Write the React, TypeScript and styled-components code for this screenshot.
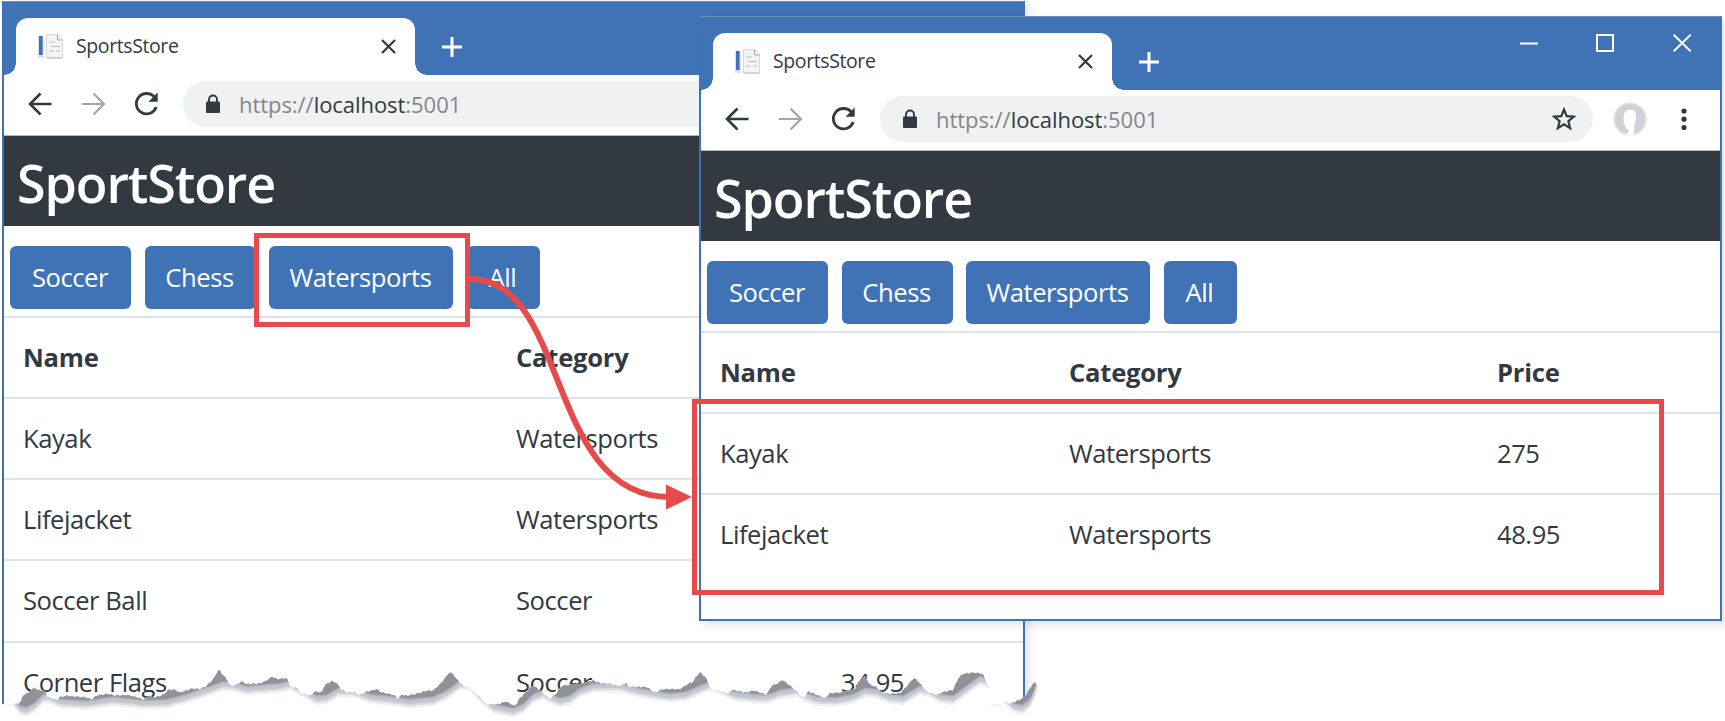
import React from "react";
import styled, { createGlobalStyle } from "styled-components";

const BLUE = "#3f73b6";
const DARK = "#333941";
const RED = "#e74a4b";

const Global = createGlobalStyle`
  *, *::before, *::after { box-sizing: border-box; }
  body {
    margin: 0;
    background: #fff;
    color: ${DARK};
    font-family: "Open Sans", "Noto Sans", sans-serif;
  }
`;

const Stage = styled.main`
  position: relative;
  width: 1725px;
  height: 721px;
  overflow: hidden;
  background: #fff;
`;

const BrowserWindow = styled.section<{ $x: number; $y: number; $height: number; $open?: boolean }>`
  position: absolute;
  left: ${(p) => p.$x}px;
  top: ${(p) => p.$y}px;
  width: 1023px;
  height: ${(p) => p.$height}px;
  display: flex;
  flex-direction: column;
  overflow: hidden;
  background: #fff;
  border: 2px solid ${BLUE};
  border-top: 1px solid #6f8fbc;
  border-bottom-width: ${(p) => (p.$open ? 0 : 2)}px;
  box-shadow: 5px ${(p) => (p.$open ? 0 : 5)}px 7px rgba(60, 65, 75, 0.12);
`;

const TitleBar = styled.header`
  flex: none;
  display: flex;
  align-items: flex-end;
  height: 73px;
  padding-left: 12px;
  background: ${BLUE};
`;

const Tab = styled.div`
  position: relative;
  display: flex;
  align-items: center;
  width: 399px;
  height: 57px;
  padding: 0 19px 1px 21px;
  background: #fff;
  border-radius: 12px 12px 0 0;

  &::before,
  &::after {
    content: "";
    position: absolute;
    bottom: 0;
    width: 12px;
    height: 12px;
  }
  &::before {
    right: 100%;
    background: radial-gradient(circle at 0 0, transparent 11.5px, #fff 12px);
  }
  &::after {
    left: 100%;
    background: radial-gradient(circle at 100% 0, transparent 11.5px, #fff 12px);
  }
`;

const TabTitle = styled.span`
  flex: 1;
  margin-left: 12px;
  font-size: 19.5px;
  line-height: 28px;
  letter-spacing: -0.4px;
`;

const NewTab = styled.div`
  display: flex;
  margin: 0 0 18px 27px;
`;

const WindowControls = styled.div`
  display: flex;
  gap: 58px;
  margin: 0 29px 38px auto;
`;

const Toolbar = styled.div`
  flex: none;
  display: flex;
  align-items: center;
  height: 61px;
  padding: 0 33px 2px 23px;
  border-bottom: 1px solid #b4b8bf;
`;

const NavButtons = styled.div`
  display: flex;
  gap: 27px;
  width: 156px;
`;

const AddressBar = styled.div`
  display: flex;
  align-items: center;
  width: 713px;
  height: 46px;
  padding: 0 17px 0 23px;
  border-radius: 23px;
  background: #f0f1f1;
`;

const Url = styled.span`
  flex: 1;
  margin-left: 19px;
  color: #85858d;
  font-size: 22px;
  line-height: 30px;
  letter-spacing: -0.05px;
`;

const Host = styled.span`
  color: ${DARK};
`;

const ToolbarEnd = styled.div`
  flex: 1;
  display: flex;
  align-items: center;
  justify-content: space-between;
  margin-left: 20px;
`;

const Banner = styled.h1`
  flex: none;
  height: 90px;
  margin: 0;
  padding-left: 13px;
  background: ${DARK};
  color: #fff;
  font-size: 52px;
  font-weight: 600;
  line-height: 93px;
  letter-spacing: -1.1px;
`;

const Categories = styled.nav`
  flex: none;
  display: flex;
  gap: 13.5px;
  padding: 20px 6px 6.5px;
`;

const CategoryButton = styled.button<{ $width: number }>`
  width: ${(p) => p.$width}px;
  height: 63px;
  padding: 0 1px 0 0;
  border: 0;
  border-radius: 6px;
  background: ${BLUE};
  color: #fff;
  font: 400 25.6px/63px "Open Sans", "Noto Sans", sans-serif;
  letter-spacing: -0.45px;
`;

const ProductTable = styled.div`
  display: flex;
  flex-direction: column;
`;

const Row = styled.div<{ $columns: string; $head?: boolean }>`
  display: grid;
  grid-template-columns: ${(p) => p.$columns};
  height: 81.3px;
  border-top: 2px solid #e0e2e6;
  font-size: 25.6px;
  font-weight: ${(p) => (p.$head ? 700 : 400)};
  line-height: 79px;
  letter-spacing: ${(p) => (p.$head ? -0.25 : -0.45)}px;
`;

const Cell = styled.span`
  padding-left: 18px;

  &:first-child {
    padding-left: 19px;
  }
`;

const Highlight = styled.div<{ $x: number; $y: number; $w: number; $h: number }>`
  position: absolute;
  left: ${(p) => p.$x}px;
  top: ${(p) => p.$y}px;
  width: ${(p) => p.$w}px;
  height: ${(p) => p.$h}px;
  border: 5px solid ${RED};
`;

const Overlay = styled.svg`
  position: absolute;
  inset: 0;
  pointer-events: none;
`;

const Favicon = () => (
  <svg width="27" height="27" viewBox="0 0 27 27">
    <path d="M1 3h6v22H1z" fill="#dfe3e9" />
    <path d="M2 3h3.600v19H2z" fill={BLUE} />
    <path d="M9.500 1.500h11l5 5v18.500h-16z" fill="#f3f4f4" stroke="#d4d7dc" />
    <path d="M20.500 2v5h5" fill="none" stroke="#a7abb4" />
    <path d="M12 9h6M14 13.500h9M12 18h5M19 18h4M10 25h15" stroke="#b9bcc5" strokeWidth="1.200" />
  </svg>
);

const Cross = () => (
  <svg width="15" height="15" viewBox="0 0 15 15">
    <path d="M1 1l13 13M14 1L1 14" stroke={DARK} strokeWidth="2.200" />
  </svg>
);

const Plus = () => (
  <svg width="20" height="20" viewBox="0 0 20 20">
    <path d="M10 0v20M0 10h20" stroke="#fff" strokeWidth="3" />
  </svg>
);

const Arrow = ({ forward }: { forward?: boolean }) => (
  <svg width="26" height="26" viewBox="0 0 26 26">
    <path
      d={forward ? "M2 13h22M13.500 2.500L24 13 13.500 23.500" : "M24.500 13H3M13.500 2.500L3 13l10.500 10.500"}
      fill="none"
      stroke={forward ? "#a3a5af" : DARK}
      strokeWidth={forward ? 2.2 : 2.6}
    />
  </svg>
);

const Reload = () => (
  <svg width="26" height="26" viewBox="0 0 26 26">
    <path d="M21.500 6.300A10.200 10.200 0 1 0 23.200 16" fill="none" stroke={DARK} strokeWidth="2.800" />
    <path d="M24.700 1.500v9.300h-9.200z" fill={DARK} />
  </svg>
);

const Lock = () => (
  <svg width="14" height="20" viewBox="0 0 14 20">
    <path d="M3 9V5.500a4 4 0 0 1 8 0V9" fill="none" stroke={DARK} strokeWidth="1.900" />
    <rect y="7.500" width="14" height="11.500" rx="1" fill={DARK} />
  </svg>
);

const Star = () => (
  <svg width="24" height="24" viewBox="0 0 24 24">
    <path
      d="M12 2.500l2.700 6.600 7.100.5-5.400 4.600 1.700 7L12 17.400l-6.100 3.800 1.700-7L2.200 9.600l7.100-.5z"
      fill="none"
      stroke={DARK}
      strokeWidth="2.200"
    />
  </svg>
);

const Avatar = () => (
  <svg width="34" height="34" viewBox="0 0 34 34">
    <circle cx="17" cy="17" r="16.500" fill="#cfd1d7" />
    <circle cx="17" cy="17" r="15.800" fill="none" stroke="#e4e6e8" strokeWidth="1.400" />
    <path
      d="M17 7.500c4.300 0 6.300 3.200 6 8-.2 3.500-1.400 5-1.700 8.200l-.4 9.300c-2.500.7-5.500.7-7.700 0l1.700-2.600 1.500-2-2.300-.9c-1.500-2.500-3.500-5-3.600-11.500 0-5 2.300-8.500 6.500-8.500z"
      fill="#fff"
    />
  </svg>
);

const Menu = () => (
  <svg width="6" height="24" viewBox="0 0 6 24">
    <circle cx="3" cy="4" r="2.600" fill={DARK} />
    <circle cx="3" cy="12.200" r="2.600" fill={DARK} />
    <circle cx="3" cy="20.500" r="2.600" fill={DARK} />
  </svg>
);

const ControlIcon = ({ d }: { d: string }) => (
  <svg width="18.500" height="18" viewBox="0 0 18.500 18">
    <path d={d} fill="none" stroke="#fff" strokeWidth="2" />
  </svg>
);

type Product = string[];

interface StoreProps {
  x: number;
  y: number;
  height: number;
  open?: boolean;
  columns: string;
  head: string[];
  products: Product[];
}

const CATEGORIES: [string, number][] = [
  ["Soccer", 121],
  ["Chess", 111],
  ["Watersports", 184],
  ["All", 73],
];

const StoreWindow = ({ x, y, height, open, columns, head, products }: StoreProps) => (
  <BrowserWindow $x={x} $y={y} $height={height} $open={open}>
    <TitleBar>
      <Tab>
        <Favicon />
        <TabTitle>SportsStore</TabTitle>
        <Cross />
      </Tab>
      <NewTab>
        <Plus />
      </NewTab>
      <WindowControls>
        <ControlIcon d="M0 9.500h18" />
        <ControlIcon d="M1 1h16v16H1z" />
        <ControlIcon d="M.7.700l17 16.600M17.700.700L.7 17.300" />
      </WindowControls>
    </TitleBar>
    <Toolbar>
      <NavButtons>
        <Arrow />
        <Arrow forward />
        <Reload />
      </NavButtons>
      <AddressBar>
        <Lock />
        <Url>
          https://<Host>localhost</Host>:5001
        </Url>
        <Star />
      </AddressBar>
      <ToolbarEnd>
        <Avatar />
        <Menu />
      </ToolbarEnd>
    </Toolbar>
    <Banner>SportStore</Banner>
    <Categories>
      {CATEGORIES.map(([name, width]) => (
        <CategoryButton key={name} $width={width}>
          {name}
        </CategoryButton>
      ))}
    </Categories>
    <ProductTable>
      <Row $columns={columns} $head>
        {head.map((h) => (
          <Cell key={h}>{h}</Cell>
        ))}
      </Row>
      {products.map((p) => (
        <Row key={p[0]} $columns={columns}>
          {p.map((v) => (
            <Cell key={v}>{v}</Cell>
          ))}
        </Row>
      ))}
    </ProductTable>
  </BrowserWindow>
);

/* Torn paper edge: ridge and foot lines in third-pixels, y measured from 660px. */
type Line = [number, number][];

const RIDGE: Line = [
  [40, 134], [62, 128], [70, 105], [85, 100], [93, 92], [105, 82], [112, 92], [120, 90], [135, 95], [143, 112], [170, 120],
  [180, 112], [200, 108], [225, 110], [260, 113], [275, 119], [290, 107], [325, 102], [345, 107], [380, 105], [410, 112],
  [430, 119], [445, 110], [465, 112], [490, 105], [505, 90], [525, 90], [540, 98], [560, 92], [577, 86], [600, 88],
  [620, 78], [640, 58], [650, 40], [657, 30], [664, 40], [675, 52], [693, 78], [712, 73], [725, 65], [740, 73], [780, 71],
  [800, 62], [817, 50], [830, 58], [860, 55], [868, 74], [880, 84], [888, 80], [900, 97], [930, 108], [945, 95],
  [965, 98], [975, 75], [995, 64], [1010, 69], [1020, 85], [1040, 98], [1060, 96], [1080, 105], [1095, 97], [1130, 88],
  [1145, 98], [1180, 105], [1195, 117], [1205, 104], [1220, 108], [1245, 103], [1280, 93], [1300, 92], [1325, 68],
  [1348, 38], [1357, 41], [1370, 58], [1390, 78], [1410, 85], [1425, 98], [1440, 112], [1460, 133], [1495, 133],
  [1518, 125], [1545, 139], [1560, 115], [1585, 90], [1600, 77], [1620, 92], [1635, 105], [1650, 118], [1670, 100],
  [1685, 78], [1710, 75], [1740, 72], [1780, 62], [1800, 70], [1830, 72], [1860, 78], [1878, 70], [1885, 80],
  [1940, 82], [1965, 98], [1990, 88], [2040, 88], [2060, 75], [2080, 65], [2090, 48], [2102, 38], [2118, 55],
  [2132, 87], [2165, 95], [2185, 101], [2195, 90], [2220, 95], [2240, 98], [2260, 92], [2300, 105], [2315, 78],
  [2335, 70], [2347, 60], [2360, 70], [2385, 90], [2400, 105], [2412, 114], [2425, 95], [2450, 105], [2475, 115],
  [2490, 100], [2525, 98], [2545, 92], [2565, 88], [2582, 62], [2594, 49], [2610, 75], [2630, 82], [2640, 95],
  [2665, 102], [2700, 100], [2720, 80], [2742, 54], [2755, 65], [2780, 95], [2810, 105], [2825, 98], [2860, 90],
  [2875, 55], [2890, 42], [2920, 38], [2948, 42], [2962, 74], [2972, 84],
];

const FOOT: Line = [
  [40, 138], [60, 165], [80, 170], [105, 155], [130, 130], [150, 130], [180, 145], [260, 150], [340, 138], [430, 148],
  [500, 146], [560, 130], [620, 110], [670, 92], [700, 95], [740, 106], [790, 102], [840, 98], [872, 90], [910, 112],
  [950, 135], [980, 132], [1015, 112], [1060, 112], [1110, 130], [1180, 138], [1230, 145], [1300, 138], [1340, 120],
  [1380, 90], [1410, 92], [1445, 130], [1480, 160], [1540, 172], [1570, 160], [1600, 130], [1630, 118], [1650, 130],
  [1680, 142], [1710, 135], [1740, 112], [1780, 98], [1860, 97], [1930, 115], [2010, 128], [2060, 122], [2100, 105],
  [2130, 92], [2165, 105], [2200, 122], [2260, 130], [2300, 132], [2340, 118], [2390, 110], [2415, 125], [2450, 138],
  [2510, 140], [2560, 130], [2595, 112], [2630, 115], [2670, 132], [2710, 135], [2760, 105], [2785, 110], [2820, 130],
  [2860, 135], [2900, 105], [2940, 76], [2972, 86],
];

const RIDGE_END: Line = [[3010, 124], [3030, 131], [3055, 122], [3075, 110], [3090, 85], [3102, 68], [3113, 76]];
const FOOT_END: Line = [[3010, 128], [3030, 148], [3045, 160], [3068, 163], [3090, 145], [3105, 112], [3113, 80]];

const at = (line: Line, x: number) => {
  for (let i = 1; i < line.length; i++) {
    const [x0, y0] = line[i - 1];
    const [x1, y1] = line[i];
    if (x <= x1) return y0 + ((y1 - y0) * (x - x0)) / (x1 - x0);
  }
  return line[line.length - 1][1];
};

const band = (ridge: Line, foot: Line, lift: number) => {
  const top: string[] = [];
  const bottom: string[] = [];
  const last = ridge[ridge.length - 1][0];
  for (let x = ridge[0][0]; x <= last; x += 3) {
    const rough = Math.sin(x * 0.9) * 1.5 + Math.sin(x * 0.37) * 1.5;
    const t = at(ridge, x) + rough;
    const b = Math.max(t, at(foot, x) - lift);
    top.push(`${(x / 3).toFixed(1)} ${(660 + t / 3).toFixed(1)}`);
    bottom.unshift(`${(x / 3).toFixed(1)} ${(660 + b / 3).toFixed(1)}`);
  }
  return `M${top.join("L")}L${bottom.join("L")}Z`;
};

const cover = (ridge: Line) =>
  `M${ridge.map(([x, y]) => `${x / 3} ${660 + y / 3}`).join("L")}L${ridge[ridge.length - 1][0] / 3} 721L${ridge[0][0] / 3} 721Z`;

const BANDS: [number, string][] = [
  [0, "#eeeff0"],
  [7, "#d9dbe0"],
  [13, "#c3c5cf"],
  [24, "#aeb0ba"],
  [29, "#919299"],
];

const TornEdge = () => (
  <Overlay width="1725" height="721" viewBox="0 0 1725 721">
    <path d={cover(RIDGE) + cover(RIDGE_END)} fill="#fff" />
    {BANDS.map(([lift, fill]) => (
      <path key={lift} d={band(RIDGE, FOOT, lift) + band(RIDGE_END, FOOT_END, lift)} fill={fill} />
    ))}
  </Overlay>
);

const Callout = () => (
  <Overlay width="1725" height="721" viewBox="0 0 1725 721">
    <path d="M470 279C570 279 545 497 670 497" fill="none" stroke={RED} strokeWidth="6" />
    <path d="M666 484.500L692 497l-26 12.500z" fill={RED} />
  </Overlay>
);

export default function App() {
  return (
    <Stage>
      <Global />
      <StoreWindow
        x={2}
        y={1}
        height={703}
        open
        columns="494px 325px 1fr"
        head={["Name", "Category"]}
        products={[
          ["Kayak", "Watersports"],
          ["Lifejacket", "Watersports"],
          ["Soccer Ball", "Soccer"],
          ["Corner Flags", "Soccer", "34.95"],
        ]}
      />
      <TornEdge />
      <StoreWindow
        x={699}
        y={16}
        height={605}
        columns="350px 428px 1fr"
        head={["Name", "Category", "Price"]}
        products={[
          ["Kayak", "Watersports", "275"],
          ["Lifejacket", "Watersports", "48.95"],
        ]}
      />
      <Highlight $x={254} $y={233} $w={216} $h={94} />
      <Highlight $x={692} $y={399} $w={972} $h={196} />
      <Callout />
    </Stage>
  );
}
